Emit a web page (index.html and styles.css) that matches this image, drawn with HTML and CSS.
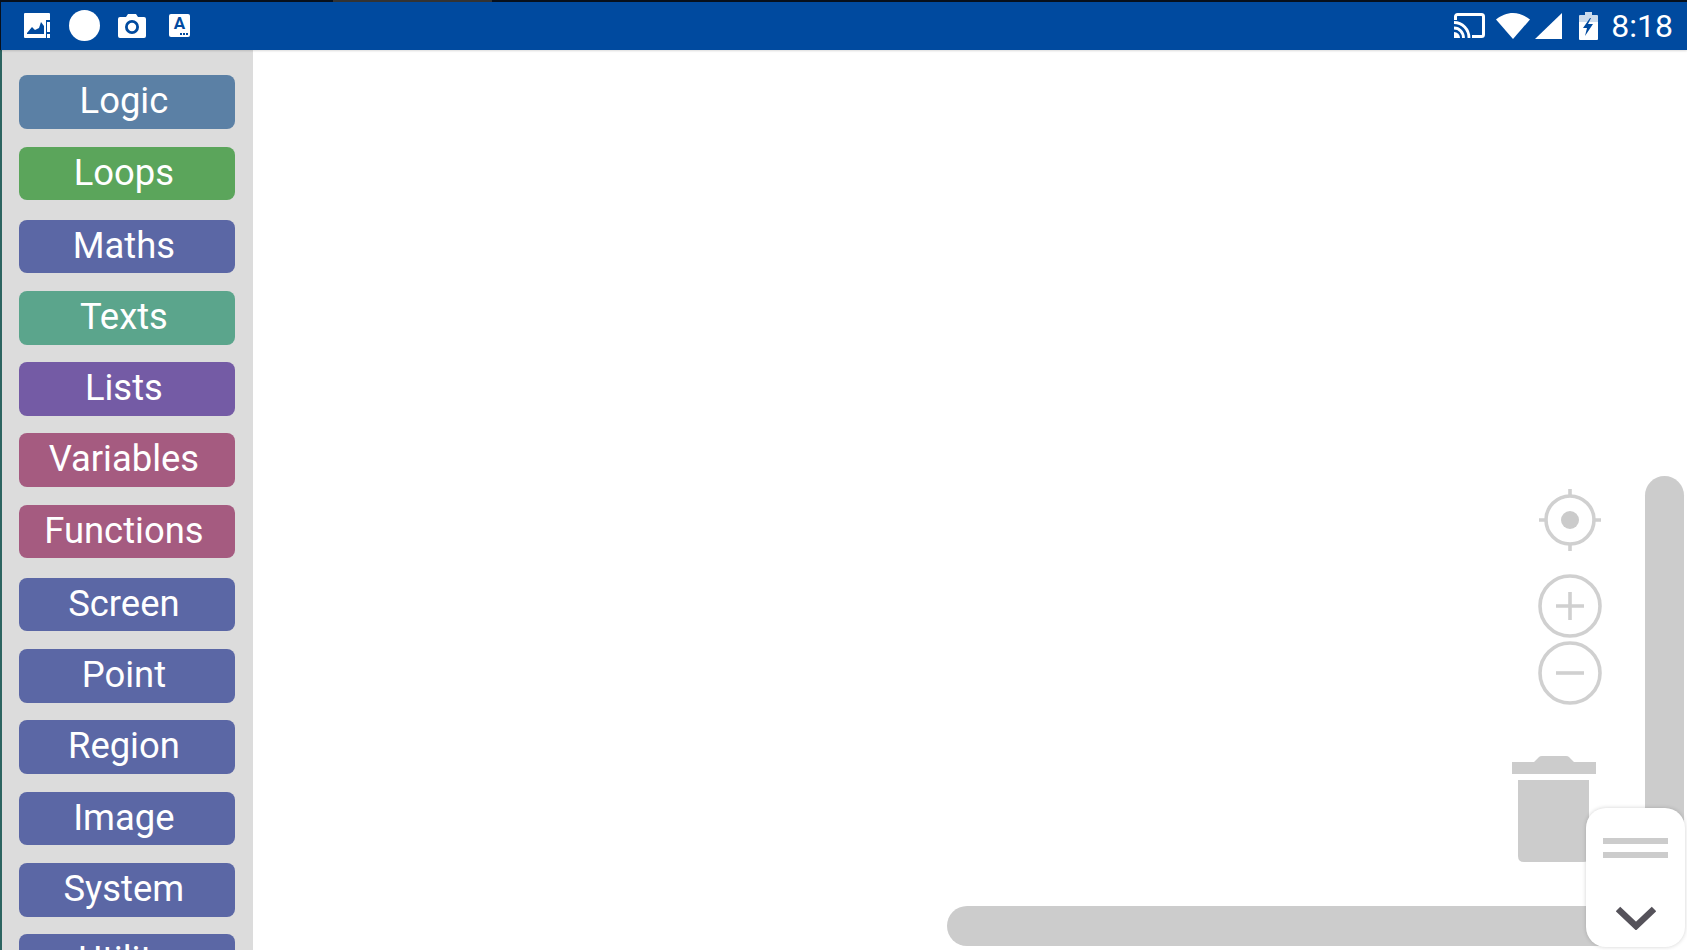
FILE: index.html
```html
<!DOCTYPE html>
<html lang="en">
<head>
  <meta charset="UTF-8" />
  <meta name="viewport" content="width=device-width, initial-scale=1" />
  <title>Blocks</title>
  <link rel="stylesheet" href="styles.css">
</head>
<body>

  <div class="notch"></div>

  <header class="statusbar">
    <div class="status-left">
      <svg class="ico-pic" viewBox="0 0 26 25">
        <path fill="#fff" d="M1 0h24a1 1 0 0 1 1 1v6H22v18H1a1 1 0 0 1-1-1V1a1 1 0 0 1 1-1z"/>
        <path fill="#004a9f" d="M3 20l5-6 3 3 4-2 2-6 3 4v8H3z"/>
        <rect x="23" y="9" width="3" height="10" fill="#fff"/>
        <rect x="23" y="21" width="3" height="4" fill="#fff"/>
      </svg>
      <span class="dot"></span>
      <svg class="ico-cam" viewBox="0 0 28 25">
        <path fill="#fff" d="M2 4h6l2-3h8l2 3h6a2 2 0 0 1 2 2v17a2 2 0 0 1-2 2H2a2 2 0 0 1-2-2V6a2 2 0 0 1 2-2z"/>
        <circle cx="14" cy="14" r="5.6" fill="none" stroke="#004a9f" stroke-width="2.800"/>
      </svg>
      <div class="ico-key">
        <span>A</span>
        <i></i><i></i><i></i>
      </div>
    </div>
    <div class="status-right">
      <svg class="ico-cast" viewBox="0 0 31 25">
        <path fill="none" stroke="#fff" stroke-width="3" d="M1.500 7V3.500a2 2 0 0 1 2-2h24a2 2 0 0 1 2 2v18a2 2 0 0 1-2 2H18"/>
        <path fill="none" stroke="#fff" stroke-width="2.800" d="M0 9.500c8.500 0 15 7 15 15.500M0 15c5.500 0 9.500 4.500 9.500 10"/>
        <path fill="#fff" d="M0 19a6 6 0 0 1 6 6H0z"/>
      </svg>
      <svg class="ico-wifi" viewBox="0 0 34 26"><path fill="#fff" d="M0 6.500C5 2.500 11 0 17 0s12 2.500 17 6.500L17 26z"/></svg>
      <svg class="ico-signal" viewBox="0 0 27 26"><path fill="#fff" d="M27 0v26H0z"/></svg>
      <svg class="ico-batt" viewBox="0 0 19 28">
        <path fill="#fff" fill-opacity=".8" d="M6 0h7v3h5a1 1 0 0 1 1 1v7H0V4a1 1 0 0 1 1-1h5z"/>
        <path fill="#fff" d="M0 10h19v17a1 1 0 0 1-1 1H1a1 1 0 0 1-1-1z"/>
        <path fill="#004a9f" d="M11 6L4 16h4l-2 8 8-12h-5l3-6z"/>
      </svg>
      <span class="clock">8:18</span>
    </div>
  </header>

  <main class="workspace">
    <nav class="toolbox">
      <div class="cat logic">Logic</div>
      <div class="cat loops group-end">Loops</div>
      <div class="cat maths">Maths</div>
      <div class="cat texts">Texts</div>
      <div class="cat lists">Lists</div>
      <div class="cat vars">Variables</div>
      <div class="cat vars group-end">Functions</div>
      <div class="cat maths">Screen</div>
      <div class="cat maths">Point</div>
      <div class="cat maths">Region</div>
      <div class="cat maths">Image</div>
      <div class="cat maths">System</div>
      <div class="cat maths">Utility</div>
    </nav>

    <div class="canvas">
      <svg class="ctl ctl-target" viewBox="0 0 64 64">
        <g fill="none" stroke="#d0d0d0" stroke-width="3.600">
          <circle cx="32" cy="32" r="24"/>
          <path d="M32 1v8M32 55v8M1 32h8M55 32h8"/>
        </g>
        <circle cx="32" cy="32" r="9" fill="#cbcbcb"/>
      </svg>
      <svg class="ctl ctl-plus" viewBox="0 0 64 64">
        <g fill="none" stroke="#d0d0d0" stroke-width="3.600">
          <circle cx="32" cy="32" r="30"/>
          <path d="M18 32h28M32 18v28"/>
        </g>
      </svg>
      <svg class="ctl ctl-minus" viewBox="0 0 64 64">
        <g fill="none" stroke="#d0d0d0" stroke-width="3.600">
          <circle cx="32" cy="32" r="30"/>
          <path d="M18 32h28"/>
        </g>
      </svg>
      <svg class="trash" viewBox="0 0 84 106">
        <path fill="#ccc" d="M0 6h22l5-5q1-1 3-1h24q2 0 3 1l5 5h22v12H0z"/>
        <path fill="#ccc" d="M6 24h71v76q0 6-6 6H12q-6 0-6-6z"/>
      </svg>
      <div class="scroll-v"></div>
      <div class="scroll-h"></div>
      <div class="drawer">
        <div class="grip"></div>
        <div class="grip"></div>
        <svg class="chevron" viewBox="0 0 40 24">
          <path fill="none" stroke="#55525a" stroke-width="6.500" d="M2 3l18 17L38 3"/>
        </svg>
      </div>
    </div>
  </main>

</body>
</html>
```

FILE: styles.css
```css
html, body {
  height: 100%;
}
body {
  margin: 0;
  height: 950px;
  overflow: hidden;
  background-color: #fff;
  font-family: Roboto, Arial, sans-serif;
  display: flex;
  flex-direction: column;
  position: relative;
}
.notch {
  position: absolute;
  top: 0;
  left: 333px;
  width: 159px;
  height: 2px;
  background-color: #333;
  z-index: 2;
}
.statusbar {
  flex: none;
  height: 48px;
  border-top: 2px solid #07101c;
  border-left: 1px solid #07101c;
  background-color: #004a9f;
  box-shadow: 0 1px 2px rgba(0, 0, 0, 0.15);
  display: flex;
  justify-content: space-between;
  align-items: center;
  z-index: 1;
}
.status-left {
  display: flex;
  align-items: center;
  padding-left: 23px;
  margin-bottom: 1px;
}
.status-right {
  display: flex;
  align-items: center;
  padding-right: 14px;
  margin-bottom: 1px;
}
.ico-pic {
  width: 26px;
  height: 25px;
}
.dot {
  width: 31px;
  height: 31px;
  margin-left: 19px;
  border-radius: 50%;
  background-color: #fff;
}
.ico-cam {
  width: 28px;
  height: 25px;
  margin-left: 18px;
}
.ico-key {
  position: relative;
  width: 21px;
  height: 23px;
  margin-left: 23px;
  border-radius: 2px;
  background-color: #fff;
  color: #004a9f;
  font-size: 17px;
  font-weight: 700;
  line-height: 19px;
  text-align: center;
}
.ico-key span {
  display: block;
}
.ico-key i {
  position: absolute;
  bottom: 2px;
  width: 2px;
  height: 2px;
  background-color: #004a9f;
}
.ico-key i:nth-of-type(1) { left: 11px; }
.ico-key i:nth-of-type(2) { left: 14px; }
.ico-key i:nth-of-type(3) { left: 17px; }
.ico-cast {
  width: 31px;
  height: 25px;
}
.ico-wifi {
  width: 34px;
  height: 26px;
  margin-left: 11px;
}
.ico-signal {
  width: 27px;
  height: 26px;
  margin-left: 5px;
}
.ico-batt {
  width: 19px;
  height: 28px;
  margin-left: 17px;
}
.clock {
  margin-left: 13px;
  color: #fff;
  font-size: 32px;
  line-height: 36px;
}
.workspace {
  flex: 1;
  display: flex;
  min-height: 0;
}
.toolbox {
  flex: none;
  width: 233.500px;
  padding: 25.400px 0 0 17.400px;
  border-left: 2px solid #2c6460;
  background-color: #dcdcdc;
  display: flex;
  flex-direction: column;
  gap: 17.600px;
  overflow: hidden;
}
.cat {
  flex: none;
  width: 216px;
  height: 53.700px;
  padding-right: 7px;
  box-sizing: border-box;
  border-radius: 8px;
  color: #fff;
  font-size: 36.400px;
  line-height: 52px;
  text-align: center;
}
.group-end {
  margin-bottom: 1.700px;
}
.logic { background-color: #5b80a5; }
.loops { background-color: #5ba55b; }
.maths { background-color: #5b67a5; }
.texts { background-color: #5ba58c; }
.lists { background-color: #745ba5; }
.vars { background-color: #a55b80; }
.canvas {
  flex: 1;
  position: relative;
}
.ctl {
  position: absolute;
  left: 1285.500px;
  width: 64px;
  height: 64px;
}
.ctl-target { top: 438px; }
.ctl-plus { top: 524px; }
.ctl-minus { top: 591px; }
.trash {
  position: absolute;
  left: 1259.500px;
  top: 706px;
  width: 84px;
  height: 106px;
}
.scroll-v {
  position: absolute;
  left: 1392.500px;
  top: 426px;
  width: 39px;
  height: 400px;
  border-radius: 20px 20px 0 0;
  background-color: #ccc;
}
.scroll-h {
  position: absolute;
  left: 694.500px;
  top: 856px;
  width: 700px;
  height: 40px;
  border-radius: 20px 0 0 20px;
  background-color: #ccc;
}
.drawer {
  position: absolute;
  left: 1333.500px;
  top: 758px;
  width: 99px;
  height: 139px;
  padding: 30px 0 0 17px;
  box-sizing: border-box;
  border-radius: 20px;
  background-color: #fff;
  box-shadow: 0 0 4px rgba(0, 0, 0, 0.18);
}
.grip {
  width: 65px;
  height: 6px;
  margin-bottom: 8px;
  background-color: #ccc;
}
.chevron {
  display: block;
  width: 40px;
  height: 24px;
  margin: 48px 0 0 13px;
}
```
